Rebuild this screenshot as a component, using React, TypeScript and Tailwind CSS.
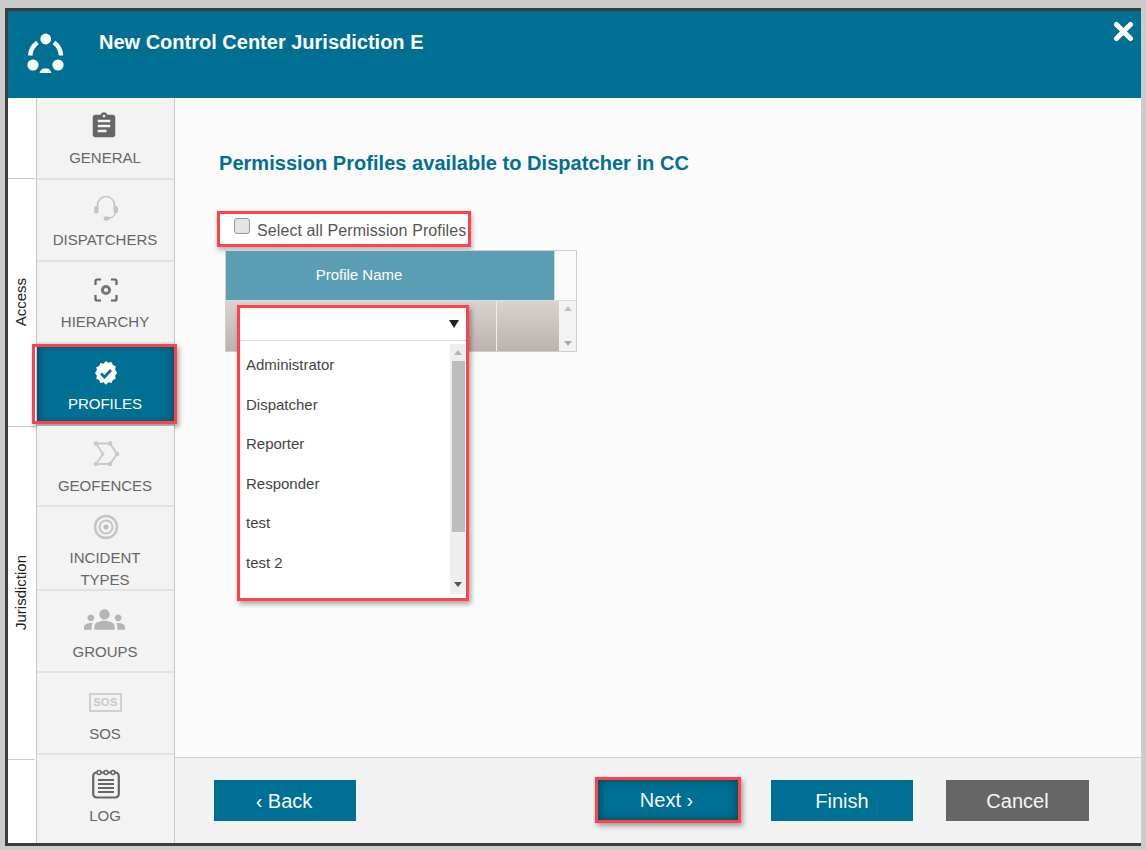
import React from "react";
import { MdAssignment, MdGroups } from "react-icons/md";

const Headset = () => (
  <svg width="26" height="28" viewBox="0 0 26 28" fill="none">
    <path d="M4.500 14V11a8.500 8.500 0 0 1 17 0v3" stroke="#c4c4c4" strokeWidth="1.600" />
    <rect x="1" y="12" width="4.500" height="7.500" rx="2.200" fill="#c4c4c4" />
    <rect x="20.500" y="12" width="4.500" height="7.500" rx="2.200" fill="#c4c4c4" />
    <path d="M22 19c0 3-3 5-7 5" stroke="#c4c4c4" strokeWidth="1.500" />
    <ellipse cx="13.500" cy="24.500" rx="3" ry="2.200" fill="#c4c4c4" />
  </svg>
);
const Focus = () => (
  <svg width="24" height="24" viewBox="0 0 24 24" fill="none" stroke="#666" strokeWidth="2.200">
    <path d="M1.500 7V3a1.500 1.500 0 0 1 1.500-1.500h4M17 1.500h4A1.500 1.500 0 0 1 22.500 3v4M22.500 17v4a1.500 1.500 0 0 1-1.500 1.500h-4M7 22.500H3A1.500 1.500 0 0 1 1.500 21v-4" />
    <circle cx="12" cy="12" r="3.600" strokeWidth="3" stroke="#777" />
  </svg>
);
const Verified = () => (
  <svg width="26" height="26" viewBox="0 0 26 26">
    <path
      fill="#fff"
      d="M13 1l2.600 1.700 3-.6 1.300 2.800 2.800 1.300-.6 3L24 13l-1.900 2.800.6 3-2.800 1.300-1.300 2.800-3-.6L13 24.700l-2.600-2.400-3 .6-1.300-2.800-2.800-1.300.6-3L2 13l1.900-2.800-.6-3 2.800-1.300 1.300-2.800 3 .6z"
    />
    <path d="M8 13.500l3.500 3.500 6.500-7" fill="none" stroke="#006f94" strokeWidth="2.800" />
  </svg>
);
const Geo = () => (
  <svg width="26" height="26" viewBox="0 0 26 26" fill="none" stroke="#c8c8c8" strokeWidth="1.800">
    <path d="M3 2.500h14l7 10.500-7 10H3l7-10z" />
    <g fill="#c8c8c8" stroke="none">
      <circle cx="3" cy="2.500" r="2.300" />
      <circle cx="17" cy="2.500" r="2.300" />
      <circle cx="24" cy="13" r="2.300" />
      <circle cx="17" cy="23" r="2.300" />
      <circle cx="3" cy="23" r="2.300" />
      <circle cx="10" cy="13" r="1.500" />
    </g>
  </svg>
);
const Target = () => (
  <svg width="26" height="26" viewBox="0 0 26 26" fill="none" stroke="#c4c4c4">
    <circle cx="13" cy="13" r="11" strokeWidth="2.400" />
    <circle cx="13" cy="13" r="6.500" strokeWidth="2" />
    <circle cx="13" cy="13" r="2.500" fill="#bdbdbd" stroke="none" />
  </svg>
);
const Log = () => (
  <svg width="28" height="30" viewBox="0 0 28 30" fill="none" stroke="#666">
    <rect x="1.200" y="3.500" width="25.600" height="25" rx="3.500" strokeWidth="2.200" />
    <circle cx="7" cy="3.500" r="2" strokeWidth="1.500" fill="#f3f3f3" />
    <circle cx="14" cy="3.500" r="2" strokeWidth="1.500" fill="#f3f3f3" />
    <circle cx="21" cy="3.500" r="2" strokeWidth="1.500" fill="#f3f3f3" />
    <path d="M6 11h16M6 15h16M6 19h16M6 23h16" strokeWidth="2" />
  </svg>
);
const Logo = () => (
  <svg width="38" height="42" viewBox="0 0 38 42" fill="#fff">
    <circle cx="18.700" cy="6" r="5.400" />
    <circle cx="6" cy="32" r="5.600" />
    <circle cx="31" cy="32" r="5.600" />
    <path d="M3.200 22.500A17 17 0 0 1 10.500 9.500" fill="none" stroke="#fff" strokeWidth="4.500" />
    <path d="M34 22.500A17 17 0 0 0 27 9.500" fill="none" stroke="#fff" strokeWidth="4.500" />
    <path d="M12.500 40Q14 36 16 35.500H21Q23 36 24.500 40z" />
  </svg>
);
const SosBox = () => (
  <div className="w-[33px] h-[19px] border-2 border-[#cfcfcf] flex items-center justify-center text-[11px] leading-none font-bold text-[#c8c8c8] tracking-[0.3px]">
    SOS
  </div>
);

type Item = { label: React.ReactNode; icon: React.ReactNode; h: string; wrap: string; active?: boolean };
const items: Item[] = [
  { label: "GENERAL", icon: <MdAssignment size={30} color="#666" className="-translate-x-[2px]" />, h: "h-[82px]", wrap: "h-[48px] pt-[8px]" },
  { label: "DISPATCHERS", icon: <Headset />, h: "h-[82px]", wrap: "h-[48px] pt-[8px]" },
  { label: "HIERARCHY", icon: <Focus />, h: "h-[82px]", wrap: "h-[48px] pt-[8px]" },
  { label: "PROFILES", icon: <Verified />, h: "h-[82px]", wrap: "h-[48px] pt-[9px]", active: true },
  { label: "GEOFENCES", icon: <Geo />, h: "h-[81px]", wrap: "h-[48px] pt-[8px]" },
  { label: <>INCIDENT<br />TYPES</>, icon: <Target />, h: "h-[84px]", wrap: "h-[39px]" },
  { label: "GROUPS", icon: <MdGroups size={41} color="#b5b5b5" className="-translate-x-[1px]" />, h: "h-[82px]", wrap: "h-[49px] pt-[8px]" },
  { label: "SOS", icon: <SosBox />, h: "h-[82px]", wrap: "h-[49px] pt-[9px]" },
  { label: "LOG", icon: <Log />, h: "h-[88px]", wrap: "h-[49px] pt-[9px]" },
];

const NavItem = ({ item }: { item: Item }) => (
  <div
    className={
      "relative flex flex-col items-center shrink-0 border-b-2 border-[#e2e2e2] text-[15px] leading-[22px] text-center last:border-b-0 " +
      item.h +
      (item.active
        ? " bg-[#006f94] text-white shadow-[inset_0_0_10px_rgba(0,0,0,0.45)]"
        : " bg-[#f3f3f3] text-[#666]")
    }
  >
    <div className={"w-full flex items-center justify-center shrink-0 " + item.wrap}>{item.icon}</div>
    <div className="mt-[1px] -translate-x-[0.5px]">{item.label}</div>
    {item.active && (
      <div className="absolute left-[-5px] right-[-3px] top-0 bottom-0 border-[3px] border-[#ff4148] shadow-[2px_3px_5px_rgba(0,0,0,0.35)]" />
    )}
  </div>
);

const Btn = ({ children, cls }: { children: React.ReactNode; cls: string }) => (
  <div className={"h-[41px] flex items-center justify-center text-[20px] text-[#f4f8fa] " + cls}>{children}</div>
);

const options = ["Administrator", "Dispatcher", "Reporter", "Responder", "test", "test 2"];

export default function App() {
  return (
    <div className="w-[1146px] h-[850px] bg-[#cccccc] pt-[8px] pl-[5px] pr-[5px] pb-[4px] overflow-hidden font-['Liberation_Sans',Arial,sans-serif]">
      <div className="h-[838px] border-t-[3px] border-l-[3px] border-b-[3px] border-[#3c3c3c] flex flex-col bg-white">
        {/* header */}
        <div className="h-[87px] shrink-0 bg-[#006f94] flex text-white relative">
          <div className="w-[76px] pl-[19px] pt-[22px] shrink-0"><Logo /></div>
          <div className="pl-[15px] pt-[19px] text-[20px] leading-[24px] font-bold">New Control Center Jurisdiction E</div>
          <svg className="absolute right-[7px] top-[10px]" width="21" height="21" viewBox="0 0 21 21">
            <path d="M3.500 3.500l14 14M17.500 3.500l-14 14" stroke="#fff" strokeWidth="5" strokeLinecap="round" />
          </svg>
        </div>
        <div className="flex-1 flex min-h-0">
          {/* strip */}
          <div className="w-[28px] shrink-0 flex flex-col bg-white text-[15px] text-[#222]">
            <div className="h-[81px] border-b border-[#c8c8c8] mr-[1px]" />
            <div className="h-[248px] border-b border-[#c8c8c8] mr-[1px] flex items-center justify-center">
              <span className="[writing-mode:vertical-rl] rotate-180">Access</span>
            </div>
            <div className="h-[333px] border-b border-[#c8c8c8] mr-[1px] flex items-center justify-center">
              <span className="[writing-mode:vertical-rl] rotate-180">Jurisdiction</span>
            </div>
          </div>
          {/* nav */}
          <div className="w-[139px] shrink-0 border-l border-r border-[#c8c8c8] flex flex-col">
            {items.map((it, i) => (
              <NavItem key={i} item={it} />
            ))}
          </div>
          {/* main */}
          <div className="flex-1 flex flex-col min-w-0">
            <div className="h-[659px] shrink-0 bg-[#fbfbfb] pl-[44px] pt-[54px]">
              <div className="text-[20px] leading-[22px] font-bold text-[#006f94] tracking-[0.04px]">
                Permission Profiles available to Dispatcher in CC
              </div>
              <div className="-ml-[2px] mt-[37px] w-[254px] h-[36px] border-[3px] border-[#ff4148] bg-white shadow-[1px_3px_5px_rgba(0,0,0,0.3)] flex items-start pl-[14px] pt-[4px]">
                <div className="w-[16px] h-[16px] rounded-[3px] border border-[#999] bg-[#e4e4e4] shrink-0" />
                <div className="ml-[7px] mt-[3px] text-[16px] tracking-[0.1px] leading-[20px] text-[#555] whitespace-nowrap">Select all Permission Profiles</div>
              </div>
              {/* table */}
              <div className="relative ml-[6px] mt-[3px] w-[352px] h-[102px] border border-[#cfcfcf] bg-[#f4f4f4]">
                <div className="flex h-[50px] border-b border-[#dddddd]">
                  <div className="w-[328px] bg-[#5b9db3] text-white text-[15px] flex items-center justify-center">
                    <span className="-translate-x-[31px]">Profile Name</span>
                  </div>
                  <div className="flex-1 border-l border-[#d8d8d8] bg-[#fafafa]" />
                </div>
                <div className="flex h-[50px]">
                  <div className="w-[271px] bg-gradient-to-b from-[#d8d3cf] to-[#bdb3ae] border-r border-[#eeeeee]" />
                  <div className="w-[62px] bg-gradient-to-b from-[#d8d3cf] to-[#bdb3ae]" />
                  <div className="flex-1 bg-[#f3f3f3] flex flex-col items-center justify-between py-[5px]">
                    <div className="w-0 h-0 border-x-[4px] border-x-transparent border-b-[5px] border-b-[#c0c0c0]" />
                    <div className="w-0 h-0 border-x-[4px] border-x-transparent border-t-[5px] border-t-[#aaa]" />
                  </div>
                </div>
                {/* dropdown */}
                <div className="absolute left-[11px] top-[54px] w-[232px] h-[296px] border-[3px] border-[#ff4148] bg-white shadow-[2px_3px_5px_rgba(0,0,0,0.35)] flex flex-col">
                  <div className="h-[33px] shrink-0 border-b border-[#d8d8d8] flex items-center justify-end pr-[7px]">
                    <div className="w-0 h-0 border-x-[5px] border-x-transparent border-t-[8px] border-t-[#222]" />
                  </div>
                  <div className="flex-1 flex min-h-0">
                    <div className="flex-1 pl-[6px] pt-[4.5px] text-[15px] text-[#444]">
                      {options.map((o) => (
                        <div key={o} className="h-[39.5px] flex items-center">{o}</div>
                      ))}
                    </div>
                    <div className="w-[15px] h-[250px] mt-[3px] mr-[1px] bg-[#eeeeee] relative">
                      <div className="absolute left-[4px] top-[6px] w-0 h-0 border-x-[4px] border-x-transparent border-b-[5px] border-b-[#b5b5b5]" />
                      <div className="absolute left-[2px] right-0 top-[17px] h-[171px] bg-[#bdbdbd]" />
                      <div className="absolute left-[4px] bottom-[7px] w-0 h-0 border-x-[4px] border-x-transparent border-t-[5px] border-t-[#555]" />
                    </div>
                  </div>
                </div>
              </div>
            </div>
            <div className="flex-1 bg-[#f2f2f2] border-t border-[#d0d0d0] flex items-start pl-[39px] pt-[22px]">
              <Btn cls="w-[142px] bg-[#006f94] pr-[2px]">‹ Back</Btn>
              <div className="ml-[239px] -mt-[3px] w-[146px] h-[46px] border-[3px] border-[#ff4148] bg-[#006f94] shadow-[inset_0_0_8px_rgba(0,0,0,0.45),2px_3px_5px_rgba(0,0,0,0.35)] flex items-center justify-center text-[20px] text-[#f4f8fa] pr-[3px]">
                Next ›
              </div>
              <Btn cls="w-[142px] ml-[30px] bg-[#006f94]">Finish</Btn>
              <Btn cls="ml-[33px] w-[143px] bg-[#666666]">Cancel</Btn>
            </div>
          </div>
        </div>
      </div>
    </div>
  );
}
